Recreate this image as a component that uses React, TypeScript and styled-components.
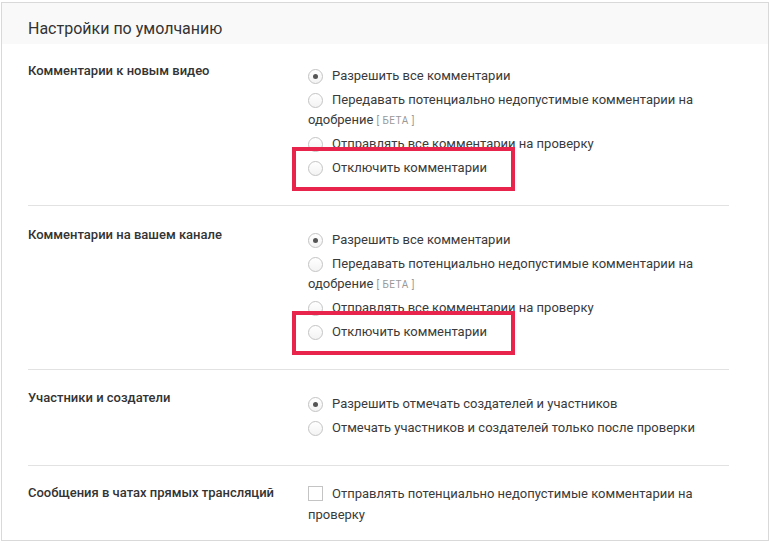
import React from "react";
import styled, { createGlobalStyle } from "styled-components";

const Global = createGlobalStyle`
  html, body { margin: 0; padding: 0; background: #ffffff; }
  body { font-family: Roboto, "Noto Sans", "Liberation Sans", sans-serif; color: #333; }
`;

const Card = styled.div`
  margin: 2px 0 0 1px;
  width: 768px;
  height: 539px;
  border: 1px solid #d9d9d9;
  box-sizing: border-box;
  background: #fff;
  overflow: hidden;
`;

const Header = styled.div`
  height: 41px;
  box-sizing: border-box;
  background: #f9f9f9;
  padding: 15px 26px 0;
  font-size: 16px;
  line-height: 22px;
  color: #333;
`;

const Section = styled.div<{ $top?: number; $last?: boolean }>`
  margin: 0 39px 0 26px;
  padding: ${(p) => p.$top ?? 24}px 0 ${(p) => (p.$last ? 0 : 27)}px;
  border-bottom: ${(p) => (p.$last ? "none" : "1px solid #e2e2e2")};
  display: grid;
  grid-template-columns: 280px 1fr;
`;

const Label = styled.div<{ $shift?: number }>`
  font-size: 13px;
  font-weight: 500;
  line-height: 20px;
  color: #333;
  margin-top: ${(p) => p.$shift ?? -5}px;
`;

const Options = styled.div`
  display: flex;
  flex-direction: column;
  gap: 4px;
`;

const Option = styled.div<{ $lh?: number }>`
  position: relative;
  font-size: 13px;
  line-height: ${(p) => p.$lh ?? 20}px;
  color: #3a3a3a;
`;

const Radio = styled.span<{ $checked?: boolean }>`
  display: inline-block;
  position: relative;
  width: 15px;
  height: 15px;
  box-sizing: border-box;
  border-radius: 50%;
  border: 1px solid #c4c4c4;
  background: linear-gradient(#ffffff, #f3f3f3);
  vertical-align: top;
  margin: 3px 9px 0 0;
  &::after {
    content: "";
    display: ${(p) => (p.$checked ? "block" : "none")};
    position: absolute;
    left: 4px;
    top: 4px;
    width: 5px;
    height: 5px;
    border-radius: 50%;
    background: #555;
  }
`;

const Check = styled.span`
  display: inline-block;
  width: 15px;
  height: 15px;
  box-sizing: border-box;
  border: 1px solid #c4c4c4;
  background: #fff;
  vertical-align: top;
  margin: 3px 9px 0 0;
`;

const Beta = styled.span`
  font-size: 10px;
  line-height: 10px;
  color: #999;
  letter-spacing: 0.5px;
  margin-left: 3px;
`;

const Highlight = styled.span`
  position: absolute;
  left: -16px;
  top: -11px;
  width: 223px;
  height: 44px;
  box-sizing: border-box;
  border: 4px solid #e8234c;
  pointer-events: none;
`;

type Opt = { text: string; checked?: boolean; beta?: boolean; highlight?: boolean };

const commentOptions: Opt[] = [
  { text: "Разрешить все комментарии", checked: true },
  { text: "Передавать потенциально недопустимые комментарии на одобрение", beta: true },
  { text: "Отправлять все комментарии на проверку" },
  { text: "Отключить комментарии", highlight: true },
];

const RadioList = ({ items }: { items: Opt[] }) => (
  <Options>
    {items.map((o) => (
      <Option key={o.text}>
        <Radio $checked={o.checked} />
        {o.text}
        {o.beta && <Beta>[ БЕТА ]</Beta>}
        {o.highlight && <Highlight />}
      </Option>
    ))}
  </Options>
);

export default function App() {
  return (
    <>
      <Global />
      <Card>
        <Header>Настройки по умолчанию</Header>
        <Section $top={22}>
          <Label>Комментарии к новым видео</Label>
          <RadioList items={commentOptions} />
        </Section>
        <Section>
          <Label>Комментарии на вашем канале</Label>
          <RadioList items={commentOptions} />
        </Section>
        <Section>
          <Label $shift={-6}>Участники и создатели</Label>
          <RadioList
            items={[
              { text: "Разрешить отмечать создателей и участников", checked: true },
              { text: "Отмечать участников и создателей только после проверки" },
            ]}
          />
        </Section>
        <Section $top={17} $last>
          <Label $shift={0}>Сообщения в чатах прямых трансляций</Label>
          <Options>
            <Option $lh={21}>
              <Check />
              Отправлять потенциально недопустимые комментарии на проверку
            </Option>
          </Options>
        </Section>
      </Card>
    </>
  );
}
